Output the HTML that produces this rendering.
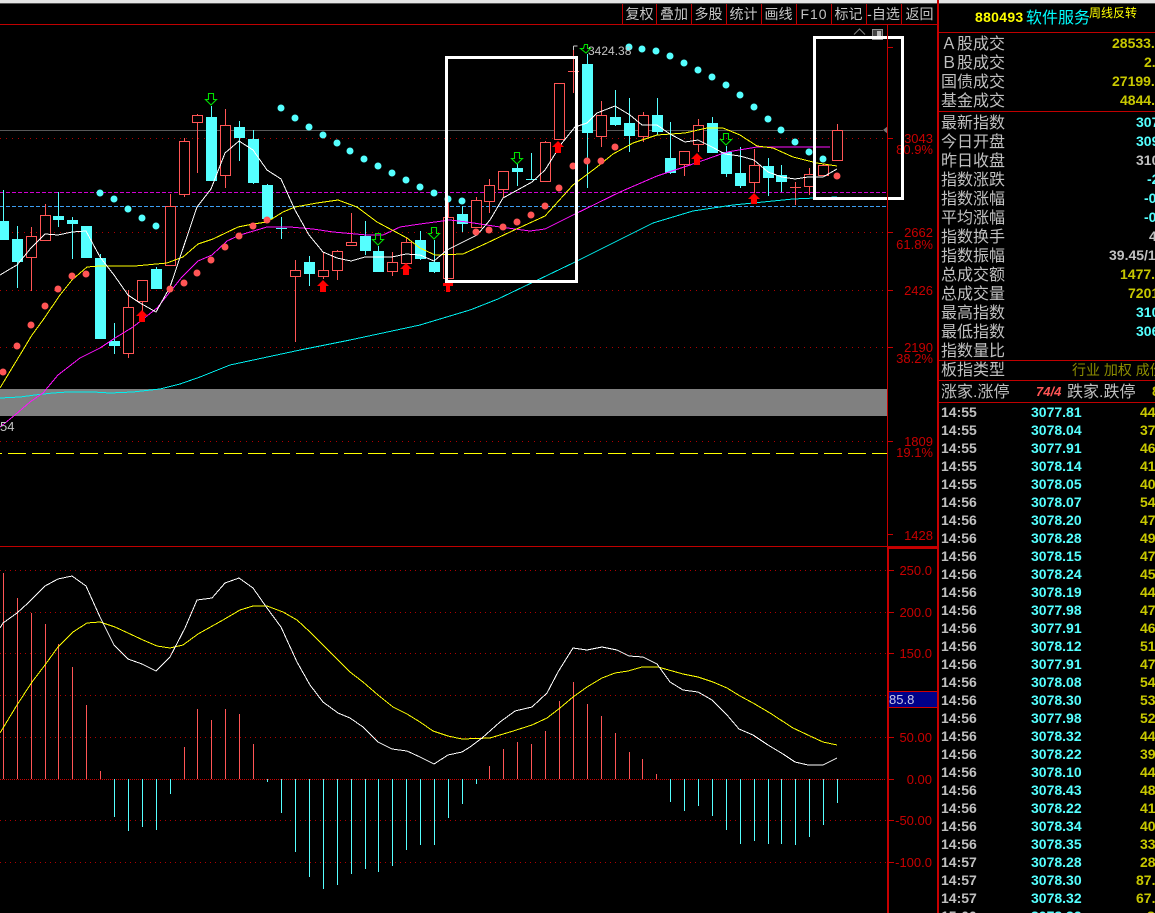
<!DOCTYPE html>
<html><head><meta charset="utf-8">
<style>
html,body{margin:0;padding:0;background:#000;overflow:hidden}
body{width:1155px;height:913px;position:relative}
svg{position:absolute;left:0;top:0;display:block}
.cj{font-family:"Liberation Sans","WenQuanYi Zen Hei","Noto Sans CJK SC",sans-serif}
.m text{font-size:14px;fill:#c4c4c4;text-anchor:middle}
.ax text{font-family:"Liberation Sans",sans-serif;font-size:13px;fill:#c80000;text-anchor:end}
.lb text{font-size:16px;fill:#c0c0c0}
.v text{font-family:"Liberation Sans",sans-serif;font-size:14px;font-weight:bold}
.t{fill:#c0c0c0}.c{fill:#55ffff}.y{fill:#c8c800}
</style></head><body>
<svg width="1155" height="913" viewBox="0 0 1155 913" xmlns="http://www.w3.org/2000/svg">
<rect width="1155" height="913" fill="#000"/>
<rect width="1155" height="3" fill="#e4e4e4"/>
<rect y="3" width="1155" height="1" fill="#555"/>

<!-- grid upper -->
<g fill="none" stroke-width="1" shape-rendering="crispEdges">
<path d="M0 24.5H938M622.5 4V24M656.5 4V24M691.5 4V24M726.5 4V24M761.5 4V24M796.5 4V24M831.5 4V24M866.5 4V24M901.5 4V24" stroke="#c00000"/>
<path d="M0 130.5H883" stroke="#585858"/>
<path d="M0 138.5H885M0 232.5H885M0 290.5H885M0 347.5H885M0 441.5H885" stroke="#b00000" stroke-dasharray="1 5"/>
<path d="M0 192.5H887" stroke="#d000d0" stroke-dasharray="4 2"/>
<path d="M0 206.5H887" stroke="#3d9df0" stroke-dasharray="4 2"/>
</g>
<rect x="0" y="389" width="887" height="27" fill="#808080"/>
<path d="M8 453.5H887" stroke="#ffff00" stroke-width="1" stroke-dasharray="18 6" shape-rendering="crispEdges"/>
<path d="M0 453.5H2" stroke="#ffff00" shape-rendering="crispEdges"/>
<path d="M883 130L888 126V134Z" fill="#777"/>

<!-- red candles -->
<g stroke="#ff5555" fill="#000" stroke-width="1" shape-rendering="crispEdges">
<path d="M31.5 227V291M45.5 204V240M128.5 290V358M142.5 280V313M170.5 194V265M184.5 138V197M197.5 114V173M225.5 109V188M295.5 260V342M323.5 252V279M337.5 250V280M351.5 213V245M392.5 252V276M406.5 237V263M448.5 201V278M476.5 197V227M489.5 179V213M503.5 171V198M545.5 141V181M559.5 83V139M573.5 46V93M601.5 101V147M643.5 112V142M684.5 151V176M698.5 119V152M754.5 149V193M809.5 168V195M823.5 164V175M837.5 124V160"/>
<rect x="26.5" y="236.500" width="10" height="21"/>
<rect x="40.5" y="215.500" width="10" height="25"/>
<rect x="123.5" y="307.500" width="10" height="46"/>
<rect x="137.500" y="280.500" width="10" height="21"/>
<rect x="165.500" y="206.500" width="10" height="59"/>
<rect x="179.500" y="141.500" width="10" height="53"/>
<rect x="192.500" y="115.500" width="10" height="7"/>
<rect x="220.500" y="125.500" width="10" height="50"/>
<rect x="290.500" y="270.500" width="10" height="6"/>
<rect x="318.500" y="270.500" width="10" height="6"/>
<rect x="332.500" y="251.500" width="10" height="19"/>
<rect x="346.500" y="242.500" width="10" height="3"/>
<rect x="387.500" y="262.500" width="10" height="9"/>
<rect x="401.500" y="242.500" width="10" height="21"/>
<rect x="443.500" y="217.500" width="10" height="61"/>
<rect x="471.500" y="200.500" width="10" height="27"/>
<rect x="484.500" y="185.500" width="10" height="16"/>
<rect x="498.500" y="171.500" width="10" height="18"/>
<rect x="540.500" y="142.500" width="10" height="39"/>
<rect x="554.500" y="83.500" width="10" height="56"/>
<rect x="596.500" y="115.500" width="10" height="21"/>
<rect x="638.500" y="115.500" width="10" height="21"/>
<rect x="679.500" y="151.500" width="10" height="13"/>
<rect x="693.500" y="125.500" width="10" height="19"/>
<rect x="749.500" y="165.500" width="10" height="17"/>
<rect x="804.500" y="174.500" width="10" height="12"/>
<rect x="818.500" y="165.500" width="10" height="10"/>
<rect x="832.500" y="130.500" width="10" height="30"/>
<path d="M568 71.500H579M790 187.500H801" fill="none"/>
<path d="M795.500 182V205" fill="none"/>
</g>

<!-- cyan candles -->
<g stroke="#55ffff" fill="#55ffff" stroke-width="1" shape-rendering="crispEdges">
<path d="M3.500 190V240M17.500 226V288M58.500 192V227M72.500 217V259M86.500 226V258M100.500 254V339M114.500 323V354M156.500 267V289M211.500 106V181M239.500 121V161M253.500 130V184M267.500 184V222M281.500 217V239M309.500 256V286M365.500 221V255M378.500 246V272M420.500 231V260M434.500 240V273M462.500 206V232M517.500 164V186M531.500 153V180M587.500 54V188M615.500 90V126M629.500 98V152M657.500 98V135M670.500 122V174M712.500 117V153M726.500 146V177M740.500 147V188M768.500 158V196M781.500 165V192" fill="none"/>
<path d="M276 228.500H287M526 179.500H537" fill="none"/>
<rect x="-1.500" y="221.500" width="10" height="18"/>
<rect x="12.500" y="239.500" width="10" height="22"/>
<rect x="53.500" y="216.500" width="10" height="3"/>
<rect x="67.500" y="220.500" width="10" height="3"/>
<rect x="81.500" y="226.500" width="10" height="31"/>
<rect x="95.500" y="258.500" width="10" height="80"/>
<rect x="109.500" y="341.500" width="10" height="4"/>
<rect x="151.500" y="269.500" width="10" height="19"/>
<rect x="206.500" y="117.500" width="10" height="63"/>
<rect x="234.500" y="127.500" width="10" height="10"/>
<rect x="248.500" y="139.500" width="10" height="43"/>
<rect x="262.500" y="185.500" width="10" height="33"/>
<rect x="304.500" y="262.500" width="10" height="11"/>
<rect x="360.500" y="236.500" width="10" height="14"/>
<rect x="373.500" y="251.500" width="10" height="20"/>
<rect x="415.500" y="240.500" width="10" height="18"/>
<rect x="429.500" y="262.500" width="10" height="9"/>
<rect x="457.500" y="214.500" width="10" height="9"/>
<rect x="512.500" y="168.500" width="10" height="3"/>
<rect x="582.500" y="64.500" width="10" height="68"/>
<rect x="610.500" y="117.500" width="10" height="7"/>
<rect x="624.500" y="123.500" width="10" height="12"/>
<rect x="652.500" y="115.500" width="10" height="16"/>
<rect x="665.500" y="158.500" width="10" height="14"/>
<rect x="707.500" y="123.500" width="10" height="29"/>
<rect x="721.500" y="152.500" width="10" height="21"/>
<rect x="735.500" y="173.500" width="10" height="12"/>
<rect x="763.500" y="166.500" width="10" height="11"/>
<rect x="776.500" y="175.500" width="10" height="6"/>
</g>

<!-- moving averages -->
<g fill="none" stroke-width="1" stroke-linejoin="round" shape-rendering="crispEdges">
<polyline stroke="#00f0f0" points="0,398 20,397 35,395 53,393 68,392 93,392 110,393 133,392 160,389 180,384 200,377 230,365 300,350 350,340 420,325 470,310 498,299 573,263 653,223 693,211 733,205 793,199 837,197"/>
<polyline stroke="#ff10ff" points="0,427 15,415 30,402 43,393 58,375 80,358 100,348 115,338 133,327 157,308 182,277 198,261 212,255 227,241 240,235 267,227 290,227 313,229 333,232 367,235 383,235 400,227 420,224 450,220 467,222 500,227 530,231 545,229 573,215 620,192 657,176 690,165 727,152 757,147 830,147"/>
<polyline stroke="#ffff00" points="0,388 32,335 43,320 60,295 72,280 87,267 100,266 135,266 167,263 183,257 198,244 213,239 238,227 253,224 267,222 283,212 295,207 317,203 338,200 357,207 377,222 392,230 407,238 420,248 435,255 463,254 487,243 510,232 545,216 573,185 597,167 613,154 633,143 657,135 685,133 707,128 723,128 740,135 757,146 773,148 793,157 817,163 837,166"/>
<polyline stroke="#ffffff" points="0,275 10,269 17,265 31,248 45,234 58,235 72,232 86,231 100,257 114,275 128,295 140,303 156,312 170,287 197,207 211,189 225,153 239,141 253,150 267,170 281,179 295,210 309,235 323,252 337,258 351,261 365,257 392,257 406,254 420,255 434,261 447,250 477,235 490,220 503,198 532,182 545,170 562,143 575,127 587,123 597,113 615,106 630,115 642,125 657,125 670,134 685,142 698,140 712,147 725,154 740,156 754,160 768,172 782,177 795,179 808,177 823,177 837,169"/>
</g>

<!-- SAR dots -->
<path fill="none" stroke="#55ffff" stroke-width="7" stroke-linecap="round" d="M100 193h0M114 199h0M128 209h0M142 218h0M156 226h0M281 108h0M295 118h0M309 127h0M323 135h0M337 143h0M350 151h0M364 159h0M378 166h0M392 173h0M406 180h0M420 187h0M434 193h0M448 199h0M462 201h0M629 47h0M642 49h0M656 51h0M670 56h0M684 63h0M698 70h0M712 77h0M726 85h0M740 95h0M754 107h0M768 119h0M781 130h0M795 142h0M809 152h0M823 159h0"/>
<path fill="none" stroke="#ff5555" stroke-width="7" stroke-linecap="round" d="M3 372h0M17 346h0M31 325h0M45 306h0M58 289h0M72 276h0M86 274h0M170 289h0M184 283h0M197 273h0M211 260h0M225 247h0M239 236h0M253 226h0M267 220h0M476 232h0M489 230h0M503 227h0M517 222h0M531 215h0M545 206h0M559 188h0M573 166h0M587 161h0M601 161h0M615 147h0M837 176h0"/>

<!-- up arrows -->
<path fill="#ff0000" d="M142 310l6 6h-3v6h-6v-6h-3zM323 280l6 6h-3v6h-6v-6h-3zM406 263l6 6h-3v6h-6v-6h-3zM448 283h5v3h-3v6h-4v-6h-3v-3zM558 141l6 6h-3v6h-6v-6h-3zM697 153l6 6h-3v6h-6v-6h-3zM754 193l6 6h-3v5h-6v-5h-3z"/>
<!-- down arrows green -->
<path fill="none" stroke="#00e000" stroke-width="1.1" d="M208.500 93.500h5v6h3l-5.500 5.500 -5.500 -5.500h3zM375.500 233.500h5v6h3l-5.500 5.500 -5.500 -5.500h3zM431.500 227.500h5v6h3l-5.500 5.500 -5.500 -5.500h3zM514.500 152.500h5v6h3l-5.500 5.500 -5.500 -5.500h3zM723.500 133.500h5v6h3l-5.500 5.500 -5.500 -5.500h3zM584.500 44.500h3v4h3l-4.500 4.500 -5.500 -4.500h3z"/>

<!-- top marker & label -->
<path d="M573.500 46V50M573.500 46h4" stroke="#c8c8c8" fill="none" shape-rendering="crispEdges"/>
<text x="588" y="55" font-family="Liberation Sans,sans-serif" font-size="12px" fill="#c4c4c4">3424.38</text>
<path d="M854 34.500L859.500 29 865 34.500" fill="none" stroke="#808080"/>
<rect x="872.500" y="29.500" width="10" height="10" fill="#444" stroke="#909090"/>
<rect x="877" y="31" width="4" height="7" fill="#bbb"/>
<text x="0" y="431" font-family="Liberation Sans,sans-serif" font-size="13px" fill="#c4c4c4">54</text>

<!-- axis labels upper -->
<g class="ax">
<text x="933" y="143">3043</text><text x="933" y="154">80.9%</text>
<text x="933" y="237">2662</text><text x="933" y="249">61.8%</text>
<text x="933" y="295">2426</text>
<text x="933" y="352">2190</text><text x="933" y="363">38.2%</text>
<text x="933" y="446">1809</text><text x="933" y="457">19.1%</text>
<text x="933" y="540">1428</text>
</g>

<!-- white frames -->
<g fill="none" stroke="#ffffff" stroke-width="3" shape-rendering="crispEdges">
<rect x="446.500" y="57.500" width="130" height="224"/>
<rect x="814.500" y="37.500" width="88" height="161"/>
</g>

<!-- axis lines upper -->
<path d="M887.500 24V546M888 47.500H893M888 138.500H893M888 232.500H893M888 290.500H893M888 347.500H893M888 441.500H893M888 534.500H893" stroke="#c80000" stroke-width="1" fill="none" shape-rendering="crispEdges"/>

<!-- MACD panel -->
<path d="M0 546.500H938" stroke="#c00000" stroke-width="1" shape-rendering="crispEdges"/>
<path d="M0 570.500H886M0 612.500H886M0 653.500H886M0 695.500H886M0 737.500H886M0 820.500H886M0 862.500H886" stroke="#b00000" stroke-dasharray="1 4" shape-rendering="crispEdges"/>
<path d="M0 779.500H886" stroke="#d00000" stroke-dasharray="1 1" shape-rendering="crispEdges"/>

<path fill="none" stroke="#ff5555" shape-rendering="crispEdges" d="M3.500 573V779M17.500 598V779M31.500 613V779M45.500 624V779M58.500 644V779M72.500 667V779M86.500 705V779M100.500 771V779M184.500 747V779M197.500 709V779M211.500 720V779M225.500 709V779M239.500 714V779M253.500 744V779M489.500 766V779M503.500 749V779M517.500 742V779M531.500 744V779M545.500 731V779M559.500 701V779M573.500 682V779M587.500 704V779M601.500 716V779M615.500 733V779M629.500 752V779M642.500 759V779M656.500 774V779"/>
<path fill="none" stroke="#55ffff" shape-rendering="crispEdges" d="M114.500 779V817M128.500 779V831M142.500 779V827M156.500 779V830M170.500 779V794M267.500 779V782M281.500 779V813M295.500 779V852M309.500 779V877M323.500 779V889M337.500 779V885M351.500 779V874M365.500 779V869M378.500 779V872M392.500 779V866M406.500 779V850M420.500 779V845M434.500 779V845M448.500 779V818M462.500 779V804M476.500 779V784M670.500 779V802M684.500 779V811M698.500 779V806M712.500 779V816M726.500 779V830M740.500 779V844M754.500 779V841M768.500 779V844M781.500 779V844M795.500 779V845M809.500 779V837M823.500 779V825M837.500 779V803"/>

<g fill="none" stroke-width="1" stroke-linejoin="round" shape-rendering="crispEdges">
<polyline stroke="#ffff00" points="0,733 17,705 32,682 45,665 58,647 73,632 87,623 100,622 115,627 128,633 143,640 157,646 170,648 183,645 198,634 223,620 240,610 253,606 267,606 283,612 297,620 310,632 330,652 350,672 363,682 378,695 393,707 407,714 420,722 433,731 448,736 462,739 490,738 510,732 532,725 547,718 560,708 573,697 587,687 602,678 615,673 628,671 642,667 658,667 683,674 698,677 713,682 727,688 740,696 753,703 770,713 793,728 810,736 823,742 837,745"/>
<polyline stroke="#ffffff" points="0,628 3,623 17,613 28,603 45,586 58,579 72,576 86,586 100,617 114,645 128,659 142,664 156,671 170,657 185,628 197,600 212,598 225,583 239,578 253,588 267,608 281,627 297,662 310,685 323,702 338,713 350,718 363,727 378,742 392,749 407,751 420,757 434,764 448,755 462,752 470,747 482,738 500,722 515,711 532,707 547,693 558,672 573,648 587,650 602,647 617,650 629,656 643,657 657,664 670,682 683,690 698,692 712,700 727,715 739,729 753,735 768,745 783,754 795,762 808,765 823,765 837,758"/>
</g>

<!-- MACD axis -->
<path d="M888 547V913" stroke="#c80000" stroke-width="2" shape-rendering="crispEdges"/>
<rect x="888" y="547" width="50" height="2" fill="#c80000"/>
<path d="M889 570.500H894M889 612.500H894M889 653.500H894M889 737.500H894M889 779.500H894M889 820.500H894M889 862.500H894" stroke="#c80000" shape-rendering="crispEdges"/>
<g class="ax">
<text x="932" y="575">250.0</text>
<text x="932" y="617">200.0</text>
<text x="932" y="658">150.0</text>
<text x="932" y="742">50.00</text>
<text x="932" y="784">0.00</text>
<text x="932" y="825">-50.00</text>
<text x="932" y="867">-100.0</text>
</g>
<rect x="889" y="691" width="49" height="17" fill="#000088"/>
<path d="M889 691.500H938M889 707.500H938" stroke="#d00000" shape-rendering="crispEdges"/>
<text x="889" y="704" font-family="Liberation Sans,sans-serif" font-size="13px" fill="#c8c8e8">85.8</text>

<!-- right panel lines -->
<path d="M938 0V913" stroke="#c80000" stroke-width="2" shape-rendering="crispEdges"/>
<path d="M939 32.500H1155M939 111.500H1155M939 360.500H1155M939 380.500H1155M939 402.500H1155" stroke="#c00000" shape-rendering="crispEdges"/>

<!-- toolbar text -->
<g class="m cj">
<text x="639.500" y="19">复权</text>
<text x="674" y="19">叠加</text>
<text x="708.500" y="19">多股</text>
<text x="743.500" y="19">统计</text>
<text x="778.500" y="19">画线</text>
<text x="814" y="19" letter-spacing="1">F10</text>
<text x="848.500" y="19">标记</text>
<text x="883.500" y="19">-自选</text>
<text x="919.500" y="19">返回</text>
</g>

<!-- title -->
<text x="975" y="22" font-family="Liberation Sans,sans-serif" font-size="14px" font-weight="bold" fill="#ffff00" letter-spacing=".3">880493</text>
<text x="1026" y="23" class="cj" font-size="16px" fill="#00ffff">软件服务</text>
<text x="1089" y="17" class="cj" font-size="12px" fill="#ffff00">周线反转</text>

<!-- labels -->
<g class="lb cj">
<text x="941" y="49">Ａ股成交</text>
<text x="941" y="68">Ｂ股成交</text>
<text x="941" y="87">国债成交</text>
<text x="941" y="106">基金成交</text>
<text x="941" y="128">最新指数</text>
<text x="941" y="147">今日开盘</text>
<text x="941" y="166">昨日收盘</text>
<text x="941" y="185">指数涨跌</text>
<text x="941" y="204">指数涨幅</text>
<text x="941" y="223">平均涨幅</text>
<text x="941" y="242">指数换手</text>
<text x="941" y="261">指数振幅</text>
<text x="941" y="280">总成交额</text>
<text x="941" y="299">总成交量</text>
<text x="941" y="318">最高指数</text>
<text x="941" y="337">最低指数</text>
<text x="941" y="356">指数量比</text>
<text x="941" y="375">板指类型</text>
<text x="941" y="397">涨家.涨停</text>
<text x="1067" y="397">跌家.跌停</text>
</g>
<text x="1072" y="375" class="cj" font-size="14px" fill="#8c8c00">行业 加权 成份</text>
<text x="1036" y="396" font-family="Liberation Sans,sans-serif" font-size="13px" font-weight="bold" font-style="italic" fill="#ff5555">74/4</text>

<!-- values -->
<g class="v">
<text x="1112" y="48" class="y">28533.</text>
<text x="1144" y="67" class="y">2.</text>
<text x="1112" y="86" class="y">27199.</text>
<text x="1120" y="105" class="y">4844.</text>
<text x="1136" y="127" class="c">307</text>
<text x="1136" y="146" class="c">309</text>
<text x="1136" y="165" class="t">310</text>
<text x="1147" y="184" class="c">-2</text>
<text x="1144" y="203" class="c">-0</text>
<text x="1144" y="222" class="c">-0</text>
<text x="1149" y="241" class="t">4</text>
<text x="1109" y="260" class="t">39.45/1</text>
<text x="1120" y="279" class="y">1477.</text>
<text x="1128" y="298" class="y">7201</text>
<text x="1136" y="317" class="c">310</text>
<text x="1136" y="336" class="c">306</text>
<text x="1152" y="396" class="y">8</text>

<text x="941" y="417" class="t">14:55</text><text x="1031" y="417" class="c">3077.81</text><text x="1140" y="417" class="y">44</text>
<text x="941" y="435" class="t">14:55</text><text x="1031" y="435" class="c">3078.04</text><text x="1140" y="435" class="y">37</text>
<text x="941" y="453" class="t">14:55</text><text x="1031" y="453" class="c">3077.91</text><text x="1140" y="453" class="y">46</text>
<text x="941" y="471" class="t">14:55</text><text x="1031" y="471" class="c">3078.14</text><text x="1140" y="471" class="y">41</text>
<text x="941" y="489" class="t">14:55</text><text x="1031" y="489" class="c">3078.05</text><text x="1140" y="489" class="y">40</text>
<text x="941" y="507" class="t">14:56</text><text x="1031" y="507" class="c">3078.07</text><text x="1140" y="507" class="y">54</text>
<text x="941" y="525" class="t">14:56</text><text x="1031" y="525" class="c">3078.20</text><text x="1140" y="525" class="y">47</text>
<text x="941" y="543" class="t">14:56</text><text x="1031" y="543" class="c">3078.28</text><text x="1140" y="543" class="y">49</text>
<text x="941" y="561" class="t">14:56</text><text x="1031" y="561" class="c">3078.15</text><text x="1140" y="561" class="y">47</text>
<text x="941" y="579" class="t">14:56</text><text x="1031" y="579" class="c">3078.24</text><text x="1140" y="579" class="y">45</text>
<text x="941" y="597" class="t">14:56</text><text x="1031" y="597" class="c">3078.19</text><text x="1140" y="597" class="y">44</text>
<text x="941" y="615" class="t">14:56</text><text x="1031" y="615" class="c">3077.98</text><text x="1140" y="615" class="y">47</text>
<text x="941" y="633" class="t">14:56</text><text x="1031" y="633" class="c">3077.91</text><text x="1140" y="633" class="y">46</text>
<text x="941" y="651" class="t">14:56</text><text x="1031" y="651" class="c">3078.12</text><text x="1140" y="651" class="y">51</text>
<text x="941" y="669" class="t">14:56</text><text x="1031" y="669" class="c">3077.91</text><text x="1140" y="669" class="y">47</text>
<text x="941" y="687" class="t">14:56</text><text x="1031" y="687" class="c">3078.08</text><text x="1140" y="687" class="y">54</text>
<text x="941" y="705" class="t">14:56</text><text x="1031" y="705" class="c">3078.30</text><text x="1140" y="705" class="y">53</text>
<text x="941" y="723" class="t">14:56</text><text x="1031" y="723" class="c">3077.98</text><text x="1140" y="723" class="y">52</text>
<text x="941" y="741" class="t">14:56</text><text x="1031" y="741" class="c">3078.32</text><text x="1140" y="741" class="y">44</text>
<text x="941" y="759" class="t">14:56</text><text x="1031" y="759" class="c">3078.22</text><text x="1140" y="759" class="y">39</text>
<text x="941" y="777" class="t">14:56</text><text x="1031" y="777" class="c">3078.10</text><text x="1140" y="777" class="y">44</text>
<text x="941" y="795" class="t">14:56</text><text x="1031" y="795" class="c">3078.43</text><text x="1140" y="795" class="y">48</text>
<text x="941" y="813" class="t">14:56</text><text x="1031" y="813" class="c">3078.22</text><text x="1140" y="813" class="y">41</text>
<text x="941" y="831" class="t">14:56</text><text x="1031" y="831" class="c">3078.34</text><text x="1140" y="831" class="y">40</text>
<text x="941" y="849" class="t">14:56</text><text x="1031" y="849" class="c">3078.35</text><text x="1140" y="849" class="y">33</text>
<text x="941" y="867" class="t">14:57</text><text x="1031" y="867" class="c">3078.28</text><text x="1140" y="867" class="y">28</text>
<text x="941" y="885" class="t">14:57</text><text x="1031" y="885" class="c">3078.30</text><text x="1136" y="885" class="y">87.</text>
<text x="941" y="903" class="t">14:57</text><text x="1031" y="903" class="c">3078.32</text><text x="1136" y="903" class="y">67.</text>
<text x="941" y="921" class="t">15:00</text><text x="1031" y="921" class="c">3078.32</text><text x="1147" y="921" class="y">8</text>
</g>
</svg>
</body></html>
